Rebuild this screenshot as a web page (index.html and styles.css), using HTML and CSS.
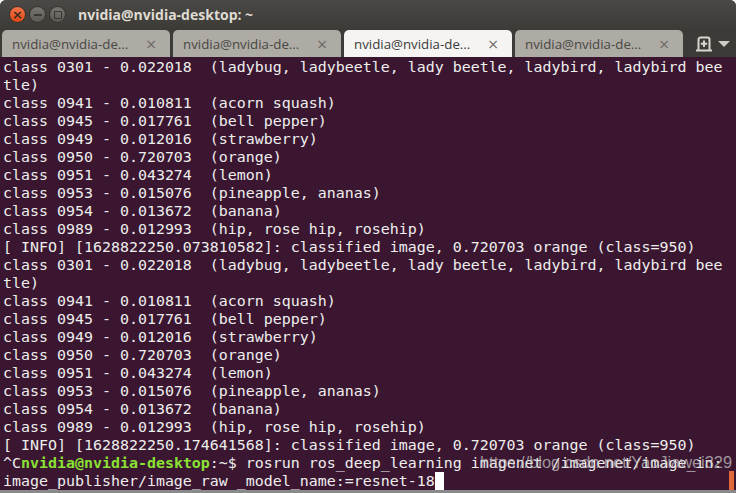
FILE: index.html
```html
<!DOCTYPE html>
<html>
<head>
  <meta name="viewport" content="width=device-width, initial-scale=1">
  <link rel="stylesheet" href="styles.css">
</head>
<body>
  <div class="window">
    <div class="titlebar">
      <div class="buttons">
        <span class="btn close">&times;</span>
        <span class="btn min"><i class="bar"></i></span>
        <span class="btn max"><i class="box"></i></span>
      </div>
      <div class="title">nvidia@nvidia-desktop: ~</div>
    </div>

    <div class="tabs">
      <div class="tab"><span class="label">nvidia@nvidia-de...</span><span class="x">&times;</span></div>
      <div class="tab"><span class="label">nvidia@nvidia-de...</span><span class="x">&times;</span></div>
      <div class="tab active"><span class="label">nvidia@nvidia-de...</span><span class="x">&times;</span></div>
      <div class="tab"><span class="label">nvidia@nvidia-de...</span><span class="x">&times;</span></div>
      <div class="tab-tools">
        <svg width="18" height="16" viewBox="0 0 18 16">
          <path d="M3.5 14.5 V3.5 a2 2 0 0 1 2 -2 h7 a2 2 0 0 1 2 2 V14.5" fill="none" stroke="#d9d6cf" stroke-width="2"/>
          <path d="M1 14.5 H17" stroke="#d9d6cf" stroke-width="2"/>
          <path d="M9 4.5 V11 M5.8 7.8 H12.2" stroke="#d9d6cf" stroke-width="2"/>
        </svg>
        <svg width="12" height="8" viewBox="0 0 12 8"><path d="M0 1 H12 L6 7 Z" fill="#cfccc5"/></svg>
      </div>
    </div>

    <div class="term">
      <pre class="screen">class 0301 - 0.022018  (ladybug, ladybeetle, lady beetle, ladybird, ladybird bee
tle)
class 0941 - 0.010811  (acorn squash)
class 0945 - 0.017761  (bell pepper)
class 0949 - 0.012016  (strawberry)
class 0950 - 0.720703  (orange)
class 0951 - 0.043274  (lemon)
class 0953 - 0.015076  (pineapple, ananas)
class 0954 - 0.013672  (banana)
class 0989 - 0.012993  (hip, rose hip, rosehip)
[ INFO] [1628822250.073810582]: classified image, 0.720703 orange (class=950)
class 0301 - 0.022018  (ladybug, ladybeetle, lady beetle, ladybird, ladybird bee
tle)
class 0941 - 0.010811  (acorn squash)
class 0945 - 0.017761  (bell pepper)
class 0949 - 0.012016  (strawberry)
class 0950 - 0.720703  (orange)
class 0951 - 0.043274  (lemon)
class 0953 - 0.015076  (pineapple, ananas)
class 0954 - 0.013672  (banana)
class 0989 - 0.012993  (hip, rose hip, rosehip)
[ INFO] [1628822250.174641568]: classified image, 0.720703 orange (class=950)
^C<b class="prompt">nvidia@nvidia-desktop</b>:~$ rosrun ros_deep_learning imagenet /imagenet/image_in:
image_publisher/image_raw _model_name:=resnet-18<span class="cursor"> </span></pre>
      <div class="scrollbar"><div class="thumb"></div></div>
      <div class="watermark">https://blog.csdn.net/YaoJiawei329</div>
    </div>
  </div>
</body>
</html>
```

FILE: styles.css
```css
html, body {
  margin: 0;
  padding: 0;
  background: #ffffff;
}
.window {
  width: 736px;
  height: 493px;
  display: flex;
  flex-direction: column;
  background: #3c3b37;
  border-radius: 6px 6px 0 0;
  overflow: hidden;
  box-sizing: border-box;
  border-bottom: 3px solid #8a8a8a;
}
.titlebar {
  height: 29px;
  display: flex;
  align-items: center;
  background: linear-gradient(#4a4945, #3c3b37);
  padding-left: 9px;
}
.buttons {
  display: flex;
  gap: 3px;
  margin-right: 12px;
}
.btn {
  width: 17px;
  height: 17px;
  border-radius: 50%;
  box-sizing: border-box;
  display: flex;
  align-items: center;
  justify-content: center;
  background: linear-gradient(#77766f, #5a5953);
  border: 1px solid #34332f;
}
.close {
  background: linear-gradient(#f2754a, #dd4814);
  color: #3c2a22;
  font: bold 13px "DejaVu Sans", sans-serif;
  line-height: 1;
}
.bar {
  width: 8px;
  height: 2px;
  background: #3a3935;
}
.box {
  width: 6px;
  height: 6px;
  border: 1.5px solid #3a3935;
}
.title {
  color: #dfdbd2;
  font: bold 14px "Open Sans", "DejaVu Sans", sans-serif;
}
.tabs {
  height: 28px;
  display: flex;
  align-items: flex-end;
  gap: 3px;
  padding-left: 2px;
}
.tab {
  width: 168px;
  height: 27px;
  box-sizing: border-box;
  display: flex;
  align-items: center;
  justify-content: space-between;
  padding: 0 13px 0 10px;
  background: #aeaba5;
  border-radius: 5px 5px 0 0;
  font: 13.3px "Open Sans", "DejaVu Sans", sans-serif;
  color: #4a4844;
}
.tab.active {
  background: #f5f4f2;
  color: #3c3c3c;
}
.tab .x {
  font: 14px "DejaVu Sans", sans-serif;
  color: #6a6864;
}
.tab-tools {
  flex: 1;
  height: 27px;
  display: flex;
  align-items: center;
  justify-content: space-between;
  padding: 0 6px 0 9px;
}
.term {
  flex: 1;
  position: relative;
  display: flex;
  background: #3a1631;
}
.screen {
  flex: 1;
  margin: 0;
  padding: 1px 0 0 3px;
  font-family: "DejaVu Sans Mono", monospace;
  font-size: 14.95px;
  line-height: 18px;
  color: #eeeeec;
  white-space: pre;
}
.prompt {
  color: #8ae234;
}
.cursor {
  background: #ffffff;
}
.scrollbar {
  width: 7px;
  display: flex;
  flex-direction: column;
  justify-content: flex-end;
}
.thumb {
  height: 19px;
  margin-right: 2px;
  background: #e0693b;
}
.watermark {
  position: absolute;
  left: 480px;
  top: 396px;
  font: 16.4px "Liberation Sans", Arial, sans-serif;
  color: rgba(205, 205, 205, 0.7);
}
```
